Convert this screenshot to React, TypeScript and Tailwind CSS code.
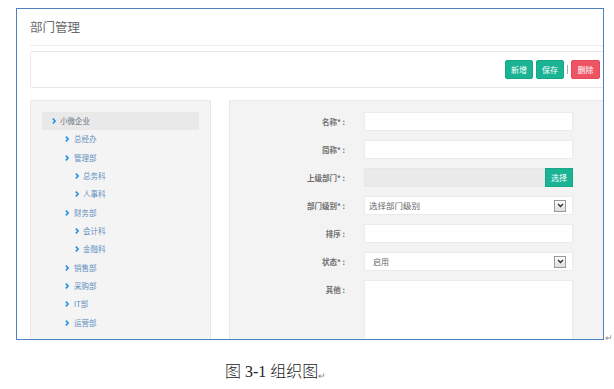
import React from "react";

const tree: { t: string; l: number; active?: boolean }[] = [
  { t: "小微企业", l: 1, active: true },
  { t: "总经办", l: 2 },
  { t: "管理部", l: 2 },
  { t: "总务科", l: 3 },
  { t: "人事科", l: 3 },
  { t: "财务部", l: 2 },
  { t: "会计科", l: 3 },
  { t: "金融科", l: 3 },
  { t: "销售部", l: 2 },
  { t: "采购部", l: 2 },
  { t: "IT部", l: 2 },
  { t: "运营部", l: 2 },
];

function Chevron() {
  return (
    <svg width="4" height="6" viewBox="0 0 4 6" className="shrink-0">
      <polyline points="0.8,0.7 3.2,3 0.8,5.3" fill="none" stroke="#1e8fe6" strokeWidth="1.6" />
    </svg>
  );
}

function SelectArrow() {
  return (
    <div className="w-[12px] h-[12px] border border-[#9a9a9a] bg-gradient-to-b from-[#fafafa] to-[#dedede] flex items-center justify-center">
      <svg width="7" height="5" viewBox="0 0 7 5">
        <polyline points="1,1 3.5,3.5 6,1" fill="none" stroke="#333" strokeWidth="1.4" />
      </svg>
    </div>
  );
}

function Label({ text }: { text: string }) {
  return (
    <div className="w-[115px] text-right text-[7.5px] font-bold text-[#707070] leading-[19px] shrink-0">{text}</div>
  );
}

export default function App() {
  return (
    <div className="w-[614px] h-[389px] bg-white font-['Noto_Sans_CJK_SC',sans-serif] overflow-hidden">
      <div className="flex items-end pl-[16px] pt-[8px]">
        <div className="w-[588px] h-[332px] border border-[#4f81bd] overflow-hidden pl-[13px] shrink-0">
          <div className="w-[579px]">
            <div className="pt-[9px] pb-[9px] border-b border-[#ececec] text-[12.5px] leading-[18px] text-[#676a6c]">
              部门管理
            </div>
            <div className="mt-[5px] h-[37px] border border-[#e7eaec] rounded-[2px] bg-white flex items-center justify-end pr-[8px]">
              <div className="w-[28px] h-[19px] rounded-[2px] bg-[#1ab394] border border-[#18a689] text-white text-[8px] flex items-center justify-center">新增</div>
              <div className="ml-[3px] w-[28px] h-[19px] rounded-[2px] bg-[#1ab394] border border-[#18a689] text-white text-[8px] flex items-center justify-center">保存</div>
              <div className="ml-[3px] w-[1px] h-[9px] bg-[#aaa]"></div>
              <div className="ml-[3px] w-[29px] h-[19px] rounded-[2px] bg-[#ed5565] border border-[#ec4758] text-white text-[8px] flex items-center justify-center">删除</div>
            </div>
            <div className="mt-[12px] flex gap-[18px]">
              <div className="w-[181px] h-[260px] bg-[#f4f4f4] border border-[#e8e8e8] rounded-[2px] pt-[11px] px-[11px]">
                {tree.map((n, i) => (
                  <div
                    key={i}
                    className={
                      "h-[18.33px] flex items-center gap-[4px] " +
                      (n.active ? "bg-[#e9e9e9] text-[#66727f] " : "text-[#6590c3] ") +
                      (n.l === 1 ? "pl-[10px]" : n.l === 2 ? "pl-[23px] gap-[5px]" : "pl-[33px]")
                    }
                  >
                    <Chevron />
                    <span className="text-[7.5px] leading-[10px]">{n.t}</span>
                  </div>
                ))}
              </div>
              <div className="w-[380px] h-[260px] bg-[#f3f3f3] border border-[#e8e8e8] rounded-[2px] pt-[11px] flex flex-col gap-[9px]">
                <div className="flex items-center gap-[19px]">
                  <Label text="名称* :" />
                  <div className="w-[209px] h-[19px] bg-white border border-[#ebebeb]"></div>
                </div>
                <div className="flex items-center gap-[19px]">
                  <Label text="简称* :" />
                  <div className="w-[209px] h-[19px] bg-white border border-[#ebebeb]"></div>
                </div>
                <div className="flex items-center gap-[19px]">
                  <Label text="上级部门* :" />
                  <div className="w-[209px] h-[19px] flex">
                    <div className="flex-1 bg-[#eaeaea] border border-[#e6e6e6]"></div>
                    <div className="w-[28px] bg-[#1ab394] border border-[#18a689] text-white text-[8px] flex items-center justify-center">选择</div>
                  </div>
                </div>
                <div className="flex items-center gap-[19px]">
                  <Label text="部门级别* :" />
                  <div className="w-[209px] h-[19px] bg-white border border-[#ebebeb] flex items-center justify-between pl-[4px] pr-[6px]">
                    <span className="text-[8.5px] text-[#666]">选择部门级别</span>
                    <SelectArrow />
                  </div>
                </div>
                <div className="flex items-center gap-[19px]">
                  <Label text="排序 :" />
                  <div className="w-[209px] h-[19px] bg-white border border-[#ebebeb]"></div>
                </div>
                <div className="flex items-center gap-[19px]">
                  <Label text="状态* :" />
                  <div className="w-[209px] h-[19px] bg-white border border-[#ebebeb] flex items-center justify-between pl-[8px] pr-[6px]">
                    <span className="text-[8px] text-[#666]">启用</span>
                    <SelectArrow />
                  </div>
                </div>
                <div className="flex items-start gap-[19px]">
                  <Label text="其他 :" />
                  <div className="w-[209px] h-[80px] bg-white border border-[#ebebeb]"></div>
                </div>
              </div>
            </div>
          </div>
        </div>
        <span className="ml-[1px] mb-[-3px] text-[9px] leading-[10px] text-[#888]">↵</span>
      </div>
      <div className="mt-[22px] pl-[225px] flex items-end">
        <span className="text-[16px] leading-[20px] font-light text-[#222] font-['Liberation_Serif','Noto_Sans_CJK_SC',serif]">图 3-1 组织图</span>
        <span className="text-[9px] leading-[12px] text-[#888]">↵</span>
      </div>
    </div>
  );
}
